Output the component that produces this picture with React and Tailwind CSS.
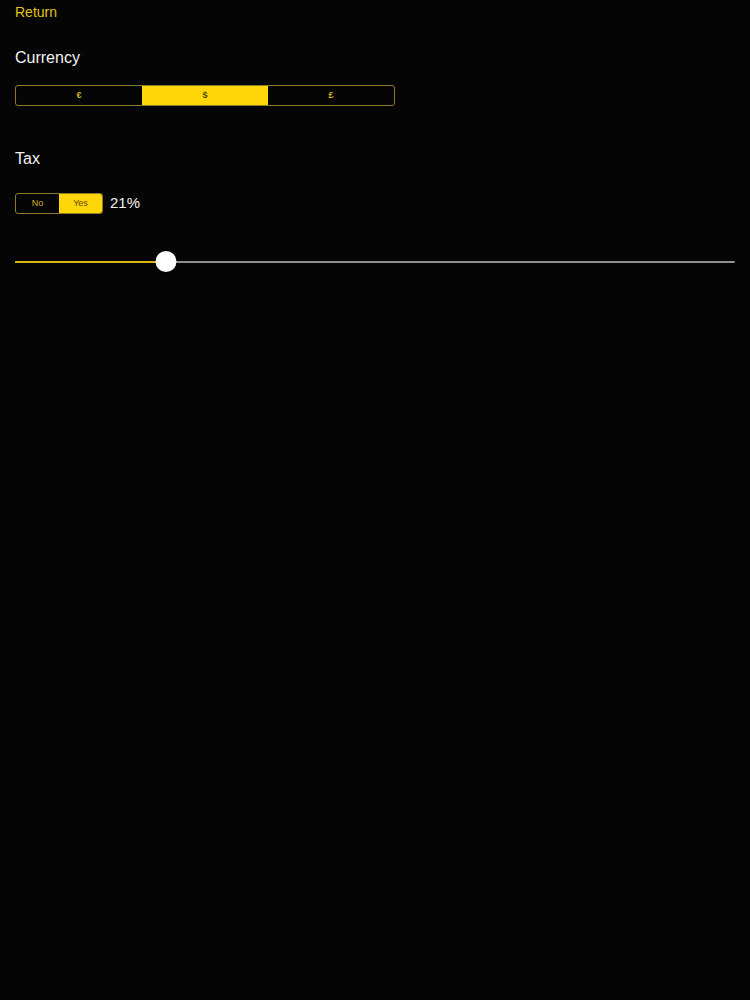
import React, { useState } from "react";

const currencies = ["€", "$", "£"];

const App = () => {
  const [currency, setCurrency] = useState(1);
  const [tax, setTax] = useState(true);
  const [rate, setRate] = useState(21);
  const pct = (rate / 100) * 100;

  return (
    <div className="min-h-screen w-full bg-[#050505] font-['Liberation_Sans',Arial,sans-serif]">
      {/* header */}
      <div className="px-[15px] pt-0">
        <button className="text-[14px] leading-[16px] text-[#e0c21c]">Return</button>
      </div>

      {/* currency */}
      <div className="px-[15px] pt-[25px]">
        <h2 className="text-[16px] leading-[18px] text-[#f2f2f2]">Currency</h2>
        <div className="mt-[18px] flex h-[21px] w-[380px] overflow-hidden rounded-[3px] border border-[#8a7a2a]">
          {currencies.map((c, i) => (
            <button
              key={c}
              onClick={() => setCurrency(i)}
              className={
                i === currency
                  ? "flex-1 bg-[#ffd60a] text-[9px] font-bold text-[#5a4a00]"
                  : "flex-1 text-[9px] font-bold text-[#cdb12a]"
              }
            >
              {c}
            </button>
          ))}
        </div>
      </div>

      {/* tax */}
      <div className="px-[15px] pt-[44px]">
        <h2 className="text-[16px] leading-[18px] text-[#f2f2f2]">Tax</h2>
        <div className="mt-[24px] flex items-center gap-[7px]">
          <div className="flex h-[21px] w-[88px] overflow-hidden rounded-[3px] border border-[#8a7a2a]">
            <button
              onClick={() => setTax(false)}
              className={
                !tax
                  ? "flex-1 bg-[#ffd60a] text-[9px] text-[#5a4a00]"
                  : "flex-1 text-[9px] text-[#cdb12a]"
              }
            >
              No
            </button>
            <button
              onClick={() => setTax(true)}
              className={
                tax
                  ? "flex-1 bg-[#ffd60a] text-[9px] text-[#5a4a00]"
                  : "flex-1 text-[9px] text-[#cdb12a]"
              }
            >
              Yes
            </button>
          </div>
          <span className="text-[15px] text-[#f2f2f2]">{rate}%</span>
        </div>

        {/* slider */}
        <div className="relative mt-[36px] h-[22px] w-[720px]">
          <div className="absolute left-0 right-0 top-[10px] h-[2px] rounded bg-[#8e8e8e]" />
          <div
            className="absolute left-0 top-[10px] h-[2px] rounded bg-[#d9b80f]"
            style={{ width: `${pct}%` }}
          />
          <div
            className="absolute top-0 h-[21px] w-[21px] -translate-x-1/2 rounded-full bg-white shadow"
            style={{ left: `${pct}%` }}
          />
          <input
            type="range"
            min={0}
            max={100}
            value={rate}
            onChange={(e) => setRate(Number(e.target.value))}
            className="absolute inset-0 h-full w-full cursor-pointer opacity-0"
          />
        </div>
      </div>
    </div>
  );
};

export default App;
